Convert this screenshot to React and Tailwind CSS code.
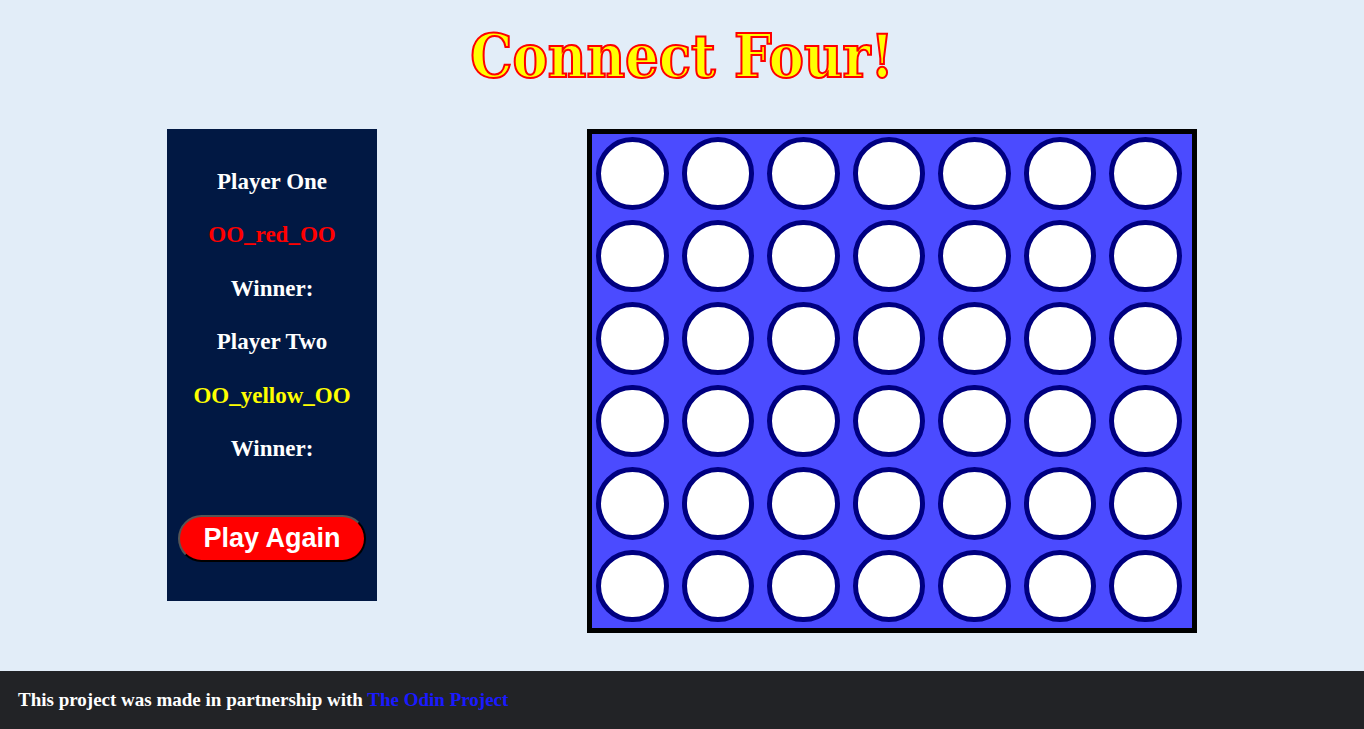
import React from 'react'

const ROWS = 6
const COLS = 7

export default function App() {
  const cells = Array.from({ length: ROWS * COLS })

  return (
    <div className="flex min-h-screen w-full flex-col bg-[#e2edf8] font-['Liberation_Serif',serif]">
      <h1 className="pt-[17px] text-center font-['DejaVu_Serif_Condensed','DejaVu_Serif',serif] text-[59px] leading-[80px] font-bold text-[#ffff00] [font-stretch:condensed] [-webkit-text-stroke:2px_#ff0000]">
        Connect Four!
      </h1>

      <div className="mt-[32px] flex items-start justify-center gap-[210px]">
        <div className="flex h-[472px] w-[210px] flex-col items-center bg-[#011843] pt-[39px] text-[23px] font-bold text-white">
          <p className="leading-[27px]">Player One</p>
          <p className="mt-[26.4px] leading-[27px] text-[#ff0000]">OO_red_OO</p>
          <p className="mt-[26.4px] leading-[27px]">Winner:</p>
          <p className="mt-[26.4px] leading-[27px]">Player Two</p>
          <p className="mt-[26.4px] leading-[27px] text-[#ffff00]">OO_yellow_OO</p>
          <p className="mt-[26.4px] leading-[27px]">Winner:</p>
          <button className="mt-[53px] h-[47px] w-[188px] rounded-full border-2 border-t-[#555] border-l-[#555] border-r-black border-b-black bg-[#ff0000] font-['Liberation_Sans',sans-serif] text-[27px] font-bold text-white">
            Play Again
          </button>
        </div>

        <div className="grid h-[504px] w-[610px] grid-cols-[repeat(7,72.5px)] grid-rows-[repeat(6,72.5px)] content-start gap-x-[13px] gap-y-[10px] border-[5px] border-black bg-[#4b4bff] pt-[3px] pl-[4px]">
          {cells.map((_, i) => (
            <div key={i} className="h-[72.5px] w-[72.5px] rounded-full border-[5px] border-[#000080] bg-white" />
          ))}
        </div>
      </div>

      <footer className="mt-auto flex h-[58px] items-center bg-[#222326] px-[18px] text-[19px] font-bold text-white">
        <p>
          This project was made in partnership with{' '}
          <a href="#" className="text-[#1a1aff]">The Odin Project</a>
        </p>
      </footer>
    </div>
  )
}
